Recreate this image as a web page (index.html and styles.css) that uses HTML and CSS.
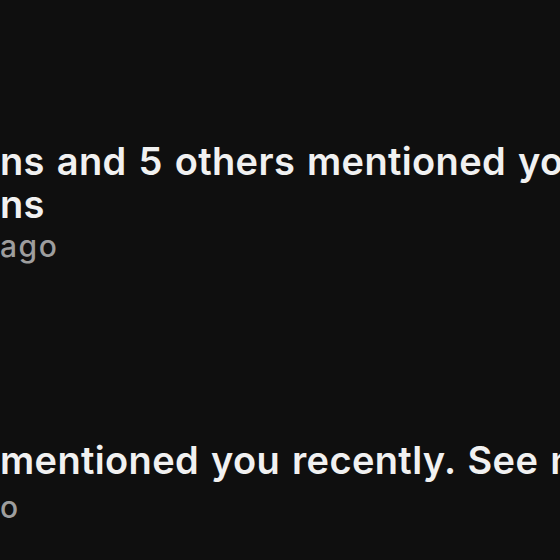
FILE: index.html
```html
<!DOCTYPE html>
<html lang="en">
<head>
  <meta charset="UTF-8">
  <title>Activity</title>
  <link rel="stylesheet" href="styles.css">
</head>
<body>
  <ul class="feed">
    <li class="item">
      <p class="title">ns and 5 others mentioned you in<br>ns</p>
      <p class="time">ago</p>
    </li>
    <li class="item">
      <p class="title">mentioned you recently. See more</p>
      <p class="time">o</p>
    </li>
  </ul>
</body>
</html>
```

FILE: styles.css
```css
html, body {
  margin: 0;
  height: 100%;
}

body {
  background-color: #0f0f0f;
  color: #f1f1f1;
  font-family: 'Inter', 'Roboto', sans-serif;
  overflow: hidden;
}

.feed {
  list-style: none;
  margin: 0;
  padding: 140px 0 0 0;
  display: flex;
  flex-direction: column;
  gap: 172px;
}

.item p {
  margin: 0;
  white-space: nowrap;
}

.title {
  font-size: 38px;
  line-height: 43px;
  font-weight: 600;
  letter-spacing: 0.35px;
  word-spacing: 2px;
}

.time {
  margin-top: 3px;
  font-size: 30px;
  line-height: 41px;
  font-weight: 500;
  letter-spacing: 1.5px;
  color: #9e9e9e;
}

.item + .item .time {
  margin-top: 5px;
}
```
